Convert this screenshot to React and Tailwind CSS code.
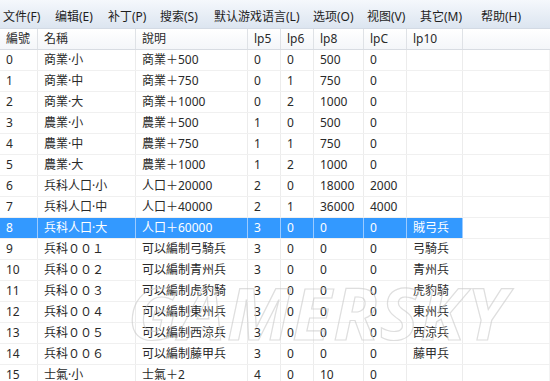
import React from 'react';

const menus = [
  ['文件(F)', 'w-[52px]'],
  ['编辑(E)', 'w-[53px]'],
  ['补丁(P)', 'w-[52px]'],
  ['搜索(S)', 'w-[54px]'],
  ['默认游戏语言(L)', 'w-[99px]'],
  ['选项(O)', 'w-[54px]'],
  ['视图(V)', 'w-[53px]'],
  ['其它(M)', 'w-[61px]'],
  ['帮助(H)', 'w-[60px]'],
];

const headers = ['編號', '名稱', '說明', 'lp5', 'lp6', 'lp8', 'lpC', 'lp10', ''];

const rows = [
  ['0', '商業·小', '商業＋500', '0', '0', '500', '0', ''],
  ['1', '商業·中', '商業＋750', '0', '1', '750', '0', ''],
  ['2', '商業·大', '商業＋1000', '0', '2', '1000', '0', ''],
  ['3', '農業·小', '農業＋500', '1', '0', '500', '0', ''],
  ['4', '農業·中', '農業＋750', '1', '1', '750', '0', ''],
  ['5', '農業·大', '農業＋1000', '1', '2', '1000', '0', ''],
  ['6', '兵科人口·小', '人口＋20000', '2', '0', '18000', '2000', ''],
  ['7', '兵科人口·中', '人口＋40000', '2', '1', '36000', '4000', ''],
  ['8', '兵科人口·大', '人口＋60000', '3', '0', '0', '0', '賊弓兵'],
  ['9', '兵科００１', '可以編制弓騎兵', '3', '0', '0', '0', '弓騎兵'],
  ['10', '兵科００２', '可以編制青州兵', '3', '0', '0', '0', '青州兵'],
  ['11', '兵科００３', '可以編制虎豹騎', '3', '0', '0', '0', '虎豹騎'],
  ['12', '兵科００４', '可以編制東州兵', '3', '0', '0', '0', '東州兵'],
  ['13', '兵科００５', '可以編制西涼兵', '3', '0', '0', '0', '西涼兵'],
  ['14', '兵科００６', '可以編制藤甲兵', '3', '0', '0', '0', '藤甲兵'],
  ['15', '士氣·小', '士氣＋2', '4', '0', '10', '0', ''],
];

const cols = 'grid grid-cols-[38px_98px_112px_33px_33px_50px_43px_56px_1fr]';

export default function App() {
  return (
    <div
      className="relative w-[550px] h-[381px] overflow-hidden bg-white text-[12px] text-[#2a2a2a]"
      style={{ fontFamily: '"Noto Sans", "Noto Sans CJK TC", sans-serif' }}
    >
      {/* menu bar */}
      <div className="h-[29px] flex items-center pt-[5px] bg-gradient-to-b from-[#f5f8fc] to-[#dce5f0] border-b border-[#d3dae4] pl-[3px]">
        {menus.map(([m, w]) => (
          <span key={m} className={`${w} shrink-0 text-[#1e1e1e] leading-none`}>
            {m}
          </span>
        ))}
      </div>

      {/* header */}
      <div className={`${cols} h-[21px] bg-gradient-to-b from-white to-[#f4f6f9] border-b border-[#d8dce2]`}>
        {headers.map((h, i) => (
          <div
            key={i}
            className={`flex items-center pl-[6px] ${i < 8 ? 'border-r border-[#dfe2e6]' : ''}`}
          >
            {h}
          </div>
        ))}
      </div>

      {/* rows */}
      {rows.map((r, ri) => {
        const sel = ri === 8;
        return (
          <div key={ri} className={`${cols} h-[21px] border-b border-[#f0f0f0]`}>
            {r.map((c, ci) => (
              <div
                key={ci}
                className={`flex items-center pl-[6px] whitespace-nowrap border-r ${
                  sel ? 'bg-[#3399ff] text-white border-[#9ccbff]' : 'border-[#ececec]'
                }`}
              >
                {c}
              </div>
            ))}
            <div className="border-r border-[#f3f3f3]" />
          </div>
        );
      })}

      {/* watermark */}
      <div className="absolute left-[128px] top-[276px] pointer-events-none select-none text-[72px] font-bold italic leading-none tracking-[2px] text-transparent opacity-60 [-webkit-text-stroke:1.2px_#c9c9c9]">
        GAMERSKY
      </div>
    </div>
  );
}
